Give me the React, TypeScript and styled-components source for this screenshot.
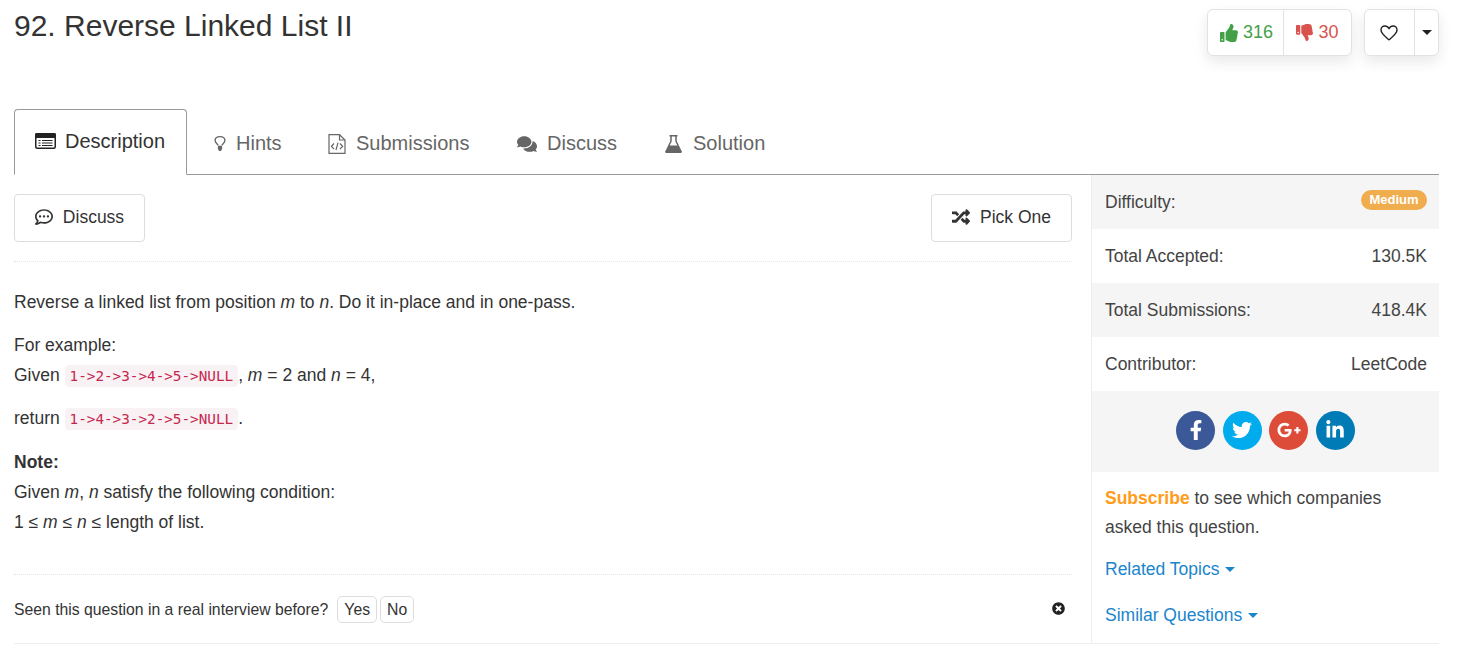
import React from 'react';
import styled, { createGlobalStyle } from 'styled-components';
import {
  FaThumbsUp, FaThumbsDown, FaComments, FaRegCommentDots, FaRandom, FaFacebookF, FaTwitter,
  FaGooglePlusG, FaLinkedinIn, FaTimesCircle,
} from 'react-icons/fa';

const GlobalStyle = createGlobalStyle`
  html, body { margin: 0; padding: 0; background: #fff; }
  body {
    font-family: "Liberation Sans", Arial, sans-serif;
    font-size: 17.5px;
    color: #333;
    overflow: hidden;
  }
  * { box-sizing: border-box; }
`;

const Page = styled.div`
  width: 1463px;
  height: 654px;
  padding: 0 24px 0 14px;
`;

const Header = styled.div`
  display: flex;
  justify-content: space-between;
  height: 109px;
`;

const Title = styled.h1`
  margin: 8px 0 0;
  font-size: 30px;
  font-weight: 400;
  line-height: 36px;
  color: #333;
`;

const Actions = styled.div`
  display: flex;
  gap: 12px;
  margin-top: 9px;
  align-items: flex-start;
`;

const ButtonGroup = styled.div`
  display: flex;
  height: 47px;
  background: #fff;
  border: 1px solid #e2e2e2;
  border-radius: 6px;
  box-shadow: 0 6px 14px rgba(0, 0, 0, 0.09);
`;

const GroupItem = styled.div<{ $color?: string; $width: number; $padLeft?: number; $padRight?: number }>`
  display: flex;
  align-items: center;
  justify-content: center;
  gap: 5px;
  width: ${({ $width }) => $width}px;
  padding: 0 ${({ $padRight }) => $padRight || 0}px 0 ${({ $padLeft }) => $padLeft || 0}px;
  font-size: 18px;
  color: ${({ $color }) => $color || '#222'};
  & + & { border-left: 1px solid #e2e2e2; }
`;

const Caret = styled.span`
  display: inline-block;
  width: 0;
  height: 0;
  border-left: 5px solid transparent;
  border-right: 5px solid transparent;
  border-top: 5px solid currentColor;
`;

const TabBar = styled.div`
  display: flex;
  height: 66px;
  border-bottom: 1px solid #999;
`;

const Tab = styled.div<{ $active?: boolean; $after: number }>`
  display: flex;
  align-items: center;
  gap: ${({ $active }) => ($active ? '9px' : '10px')};
  height: ${({ $active }) => ($active ? '66px' : '65px')};
  padding: ${({ $active }) => ($active ? '0 21px 2px 20px' : '4px 19px 0')};
  margin-right: ${({ $after }) => $after}px;
  font-size: 20px;
  color: ${({ $active }) => ($active ? '#333' : '#666')};
  background: #fff;
  border: ${({ $active }) => ($active ? '1px solid #999' : 'none')};
  border-bottom: ${({ $active }) => ($active ? '1px solid #fff' : 'none')};
  border-radius: 4px 4px 0 0;
`;

const Body = styled.div`
  display: flex;
`;

const Main = styled.div`
  width: 1078px;
  height: 468px;
  padding: 19px 19px 0 0;
  border-right: 1px solid #eee;
`;

const Toolbar = styled.div`
  display: flex;
  justify-content: space-between;
  padding-bottom: 19px;
  border-bottom: 1px dotted #e5e5e5;
`;

const OutlineButton = styled.div<{ $width: number }>`
  display: flex;
  align-items: center;
  justify-content: center;
  gap: 10px;
  width: ${({ $width }) => $width}px;
  height: 48px;
  padding-bottom: 2px;
  font-size: 17.5px;
  color: #333;
  border: 1px solid #ddd;
  border-radius: 4px;
`;

const Content = styled.div`
  height: 313px;
  padding-top: 25px;
  border-bottom: 1px dotted #e5e5e5;
  line-height: 30px;
  color: #333;
`;

const Para = styled.p<{ $after?: number }>`
  margin: 0 0 ${({ $after }) => $after || 13}px;
`;

const Code = styled.code`
  padding: 3px 5px;
  font-family: "DejaVu Sans Mono", monospace;
  font-size: 14.3px;
  line-height: 1;
  color: #c7254e;
  background: #f9f2f4;
  border-radius: 4px;
`;

const Feedback = styled.div`
  display: flex;
  align-items: center;
  height: 68px;
  padding-top: 1px;
  font-size: 15.75px;
`;

const Question = styled.span`
  margin-right: 6px;
`;

const SmallButton = styled.div`
  display: flex;
  align-items: center;
  height: 27px;
  padding: 0 6px;
  margin-left: 3px;
  font-size: 15.75px;
  color: #333;
  border: 1px solid #ddd;
  border-radius: 5px;
`;

const CloseIcon = styled.span`
  display: flex;
  margin: 0 7px 3px auto;
  font-size: 13px;
  color: #222;
`;

const Sidebar = styled.div`
  width: 347px;
  height: 468px;
`;

const StatRow = styled.div<{ $shaded?: boolean }>`
  display: flex;
  align-items: center;
  justify-content: space-between;
  height: 54px;
  padding: 0 12px 0 13px;
  color: #444;
  background: ${({ $shaded }) => ($shaded ? '#f5f5f5' : '#fff')};
`;

const Badge = styled.span`
  display: inline-block;
  align-self: flex-start;
  margin-top: 15px;
  padding: 0 8.5px;
  height: 20px;
  font-size: 13px;
  font-weight: 700;
  line-height: 19px;
  color: #fff;
  background: #f0ad4e;
  border-radius: 10px;
`;

const ShareRow = styled.div`
  display: flex;
  justify-content: center;
  gap: 7.5px;
  height: 81px;
  padding-top: 19.5px;
  background: #f5f5f5;
`;

const ShareButton = styled.div<{ $bg: string; $size?: number }>`
  display: flex;
  align-items: center;
  justify-content: center;
  width: 39px;
  height: 39px;
  font-size: ${({ $size }) => $size || 20}px;
  color: #fff;
  background: ${({ $bg }) => $bg};
  border-radius: 50%;
`;

const SidebarText = styled.div`
  padding: 12px 13px 0;
  line-height: 29px;
  color: #444;
`;

const Subscribe = styled.span`
  font-weight: 700;
  color: #ff9c1a;
`;

const TopicLink = styled.div<{ $gap: number }>`
  display: flex;
  align-items: center;
  gap: 6px;
  height: 24px;
  margin: ${({ $gap }) => $gap}px 13px 0;
  color: #1a85cc;
`;

const BottomRule = styled.div`
  height: 1px;
  background: #eee;
`;

const ListAltIcon = () => (
  <svg width="21" height="16" viewBox="0 0 21 16">
    <rect x="0.75" y="0.75" width="19.5" height="14.5" rx="1.5" fill="none" stroke="#222" strokeWidth="1.5" />
    <rect x="0" y="0" width="21" height="5" rx="1.5" fill="#222" />
    <path d="M3.5 7.5h2M7 7.5h10.5M3.5 10h2M7 10h10.5M3.5 12.5h2M7 12.5h10.5" stroke="#222" strokeWidth="1.2" />
  </svg>
);

const BulbIcon = () => (
  <svg width="12" height="17" viewBox="0 0 13 17">
    <path d="M4.4 10.5C3.9 8.9 1.2 7.9 1.2 5.2 1.2 2.6 3.5 1 6.5 1s5.3 1.6 5.3 4.2c0 2.7-2.7 3.7-3.2 5.3" fill="none" stroke="#666" strokeWidth="1.5" />
    <path d="M4.2 11h4.6v3.2L7.6 16.6H5.4L4.2 14.2z" fill="#666" />
  </svg>
);

const FileCodeIcon = () => (
  <svg width="18" height="20" viewBox="0 0 18 20">
    <path d="M1 .7h10.5L17 6v13.3H1z" fill="none" stroke="#666" strokeWidth="1.2" />
    <path d="M11.5.7V6H17" fill="none" stroke="#666" strokeWidth="1.2" />
    <path d="M6 9.5 3.4 12.3 6 15M12 9.5l2.6 2.8L12 15M10 8.6 8 16" fill="none" stroke="#666" strokeWidth="1.2" />
  </svg>
);

const FlaskIcon = () => (
  <svg width="18" height="18" viewBox="0 0 18 18">
    <path d="M4.5.8h8M6 1v5.2L1 16.6h15L11 6.2V1" fill="none" stroke="#666" strokeWidth="1.5" />
    <path d="M4.2 10.5h8.6L16.6 18H.4z" fill="#666" />
  </svg>
);

const HeartIcon = () => (
  <svg width="18" height="16" viewBox="0 0 18 16">
    <path d="M9 14.8C5.6 11.9 1 8.6 1 5 1 2.6 2.8 1 4.9 1 6.7 1 8.2 2 9 3.6 9.8 2 11.3 1 13.1 1 15.2 1 17 2.6 17 5c0 3.6-4.6 6.9-8 9.8z" fill="none" stroke="#222" strokeWidth="1.4" strokeLinejoin="round" />
  </svg>
);

export default function App() {
  return (
    <Page>
      <GlobalStyle />
      <Header>
        <Title>92. Reverse Linked List II</Title>
        <Actions>
          <ButtonGroup>
            <GroupItem $color="#43a047" $width={75} $padLeft={2}><FaThumbsUp size={18} /> 316</GroupItem>
            <GroupItem $color="#d9534f" $width={68}><FaThumbsDown size={17} /> 30</GroupItem>
          </ButtonGroup>
          <ButtonGroup>
            <GroupItem $width={49} $padRight={2}><HeartIcon /></GroupItem>
            <GroupItem $width={24}><Caret /></GroupItem>
          </ButtonGroup>
        </Actions>
      </Header>

      <TabBar>
        <Tab $active $after={8}><ListAltIcon />Description</Tab>
        <Tab $after={8.4}><BulbIcon />Hints</Tab>
        <Tab $after={9.6}><FileCodeIcon />Submissions</Tab>
        <Tab $after={10}><FaComments size={20} />Discuss</Tab>
        <Tab $after={0}><FlaskIcon />Solution</Tab>
      </TabBar>

      <Body>
        <Main>
          <Toolbar>
            <OutlineButton $width={131}><FaRegCommentDots size={18} />Discuss</OutlineButton>
            <OutlineButton $width={141}><FaRandom size={18} />Pick One</OutlineButton>
          </Toolbar>
          <Content>
            <Para>Reverse a linked list from position <em>m</em> to <em>n</em>. Do it in-place and in one-pass.</Para>
            <Para>
              For example:<br />
              Given <Code>1-&gt;2-&gt;3-&gt;4-&gt;5-&gt;NULL</Code>, <em>m</em> = 2 and <em>n</em> = 4,
            </Para>
            <Para $after={14}>return <Code>1-&gt;4-&gt;3-&gt;2-&gt;5-&gt;NULL</Code>.</Para>
            <Para>
              <strong>Note:</strong><br />
              Given <em>m</em>, <em>n</em> satisfy the following condition:<br />
              1 ≤ <em>m</em> ≤ <em>n</em> ≤ length of list.
            </Para>
          </Content>
          <Feedback>
            <Question>Seen this question in a real interview before?</Question>
            <SmallButton>Yes</SmallButton>
            <SmallButton>No</SmallButton>
            <CloseIcon><FaTimesCircle /></CloseIcon>
          </Feedback>
        </Main>
        <Sidebar>
          <StatRow $shaded>Difficulty:<Badge>Medium</Badge></StatRow>
          <StatRow>Total Accepted:<span>130.5K</span></StatRow>
          <StatRow $shaded>Total Submissions:<span>418.4K</span></StatRow>
          <StatRow>Contributor:<span>LeetCode</span></StatRow>
          <ShareRow>
            <ShareButton $bg="#3b5998"><FaFacebookF /></ShareButton>
            <ShareButton $bg="#00aced"><FaTwitter /></ShareButton>
            <ShareButton $bg="#dd4b39" $size={24}><FaGooglePlusG /></ShareButton>
            <ShareButton $bg="#007bb6"><FaLinkedinIn /></ShareButton>
          </ShareRow>
          <SidebarText><Subscribe>Subscribe</Subscribe> to see which companies<br />asked this question.</SidebarText>
          <TopicLink $gap={15}>Related Topics<Caret /></TopicLink>
          <TopicLink $gap={22}>Similar Questions<Caret /></TopicLink>
        </Sidebar>
      </Body>
      <BottomRule />
    </Page>
  );
}
